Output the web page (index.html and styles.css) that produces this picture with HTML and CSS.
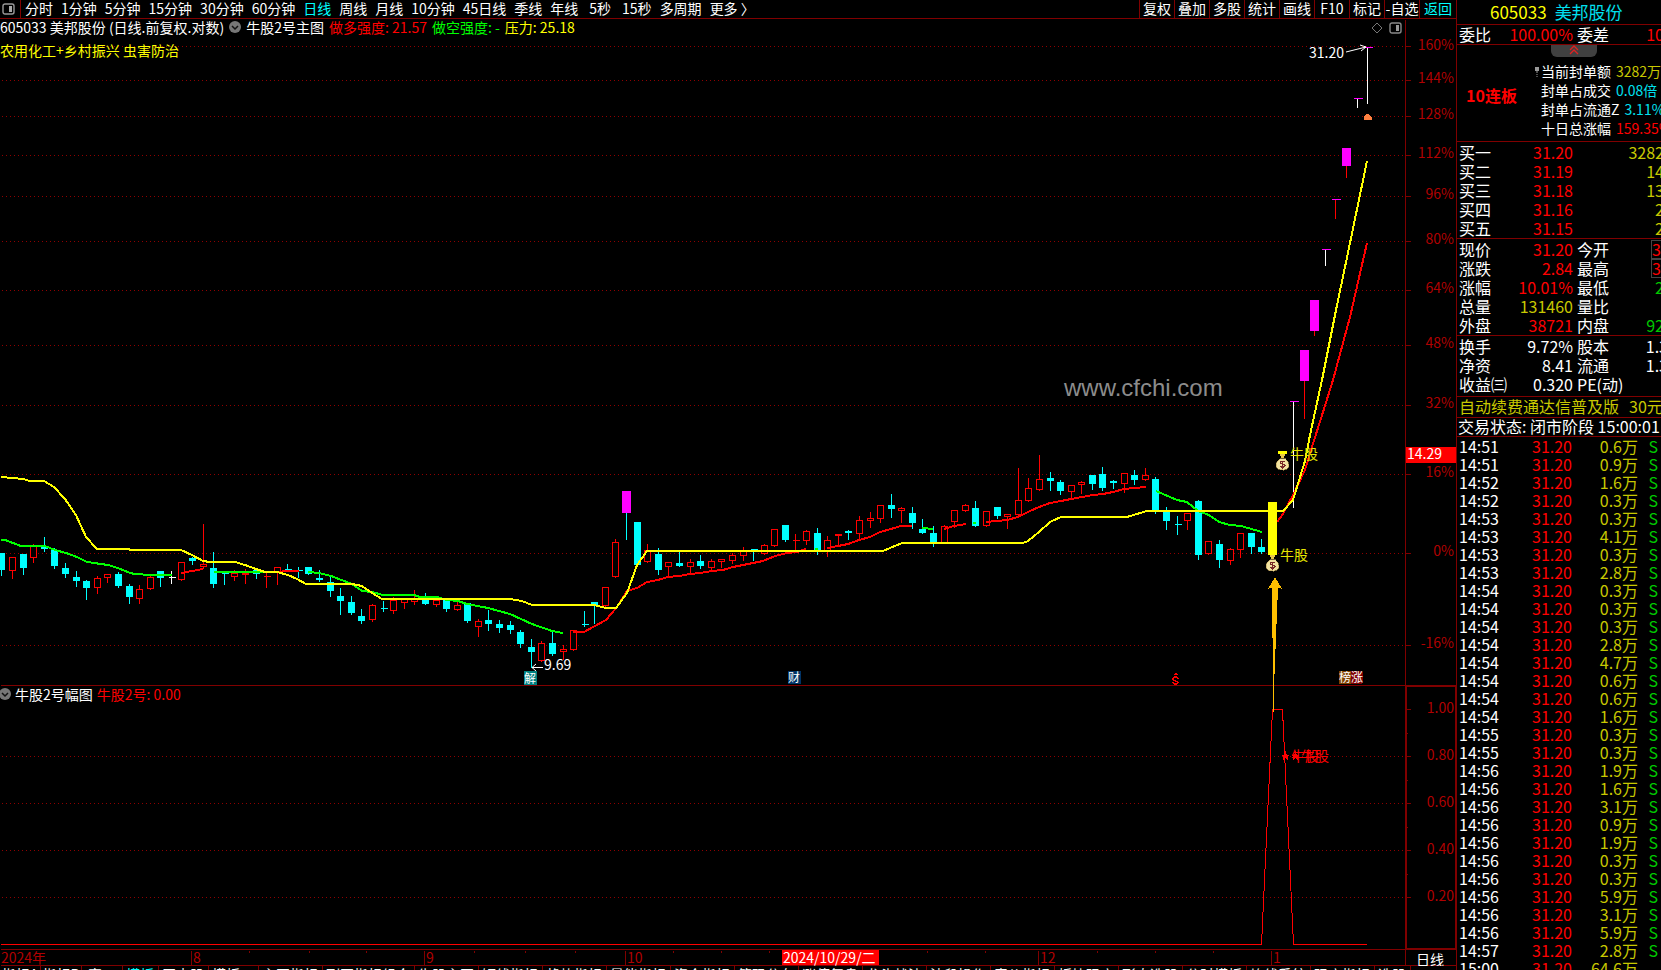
FILE: index.html
```html
<!DOCTYPE html>
<html lang="zh-CN">
<head>
<meta charset="utf-8">
<title>605033 美邦股份</title>
<link rel="stylesheet" href="styles.css">
</head>
<body>
<div class="app">
  <main class="charts">
    <nav class="topbar">
      <button class="icon-btn" aria-label="侧栏"><svg width="13" height="12" viewBox="0 0 13 12"><rect x="1" y="1" width="11" height="10" rx="2" fill="none" stroke="#999" stroke-width="1.4"/><rect x="7" y="3" width="3" height="6" fill="#aaa"/></svg></button>
      <div class="periods">
        <button>分时</button><button>1分钟</button><button>5分钟</button><button>15分钟</button><button>30分钟</button><button>60分钟</button><button class="active">日线</button><button>周线</button><button>月线</button><button>10分钟</button><button>45日线</button><button>季线</button><button>年线</button><button class="sec">5秒</button><button class="sec">15秒</button><button>多周期</button><button>更多 〉</button>
      </div>
      <div class="tools">
        <button>复权</button><button>叠加</button><button>多股</button><button>统计</button><button>画线</button><button>F10</button><button>标记</button><button>-自选</button><button class="active last">返回</button>
      </div>
    </nav>

    <section class="panel">
      <div class="legend">
        <span>605033 美邦股份 (日线.前复权.对数)</span>
        <svg class="fold" width="12" height="12" viewBox="0 0 12 12"><circle cx="6" cy="6" r="6" fill="#777"/><path d="M3 5l3 3 3-3" fill="none" stroke="#111" stroke-width="1.5"/></svg>
        <span>牛股2号主图</span>
        <span class="red">做多强度: 21.57</span>
        <span class="lime">做空强度: -</span>
        <span class="yellow">压力: 25.18</span>
      </div>
      <div class="concept">农用化工+乡村振兴 虫害防治</div>
      <svg class="plot" viewBox="0 19 1456 667">
        <g class="grid" transform="translate(0 .5)">
          <path d="M2 46H1405M2 80H1405M2 116H1405M2 155H1405M2 196H1405M2 241H1405M2 290H1405M2 345H1405M2 405H1405M2 474H1405M2 553H1405M2 645H1405"/>
        </g>
        <g class="frame" transform="translate(.5 .5)">
          <path d="M1405 19V685M0 685H1456M1405 46h5M1405 80h5M1405 116h5M1405 155h5M1405 196h5M1405 241h5M1405 290h5M1405 345h5M1405 405h5M1405 474h5M1405 553h5M1405 645h5"/>
        </g>
        <g class="axis">
          <text x="1454" y="50">160%</text><text x="1454" y="83">144%</text><text x="1454" y="119">128%</text><text x="1454" y="158">112%</text><text x="1454" y="199">96%</text><text x="1454" y="244">80%</text><text x="1454" y="293">64%</text><text x="1454" y="348">48%</text><text x="1454" y="408">32%</text><text x="1454" y="477">16%</text><text x="1454" y="556">0%</text><text x="1454" y="648">-16%</text>
        </g>
        <text class="watermark" x="1064" y="396">www.cfchi.com</text>
        <g id="candles" transform="translate(.5 .5)"></g>
        <g class="ma green">
          <path d="M1 540L5 540 21 546H45L55 550 66 553 77 557 87 562 108 565 118 568 130 573 135 574 150 575H172M214 572H265M308 572L319 573 331 576 352 584 362 591 372 592 383 595H414L420 597H437L447 600 458 601 467 604 488 608 510 614 532 624 552 631 563 633M815 549H818M922 528L933 529M973 523H976M1156 491L1177 500 1187 502 1198 511 1209 515 1219 522 1230 525 1241 526 1262 532"/>
        </g>
        <g class="ma red-line">
          <path d="M181 573L192 571 203 569M277 572L288 571H299M573 632H584L595 626 606 620 617 607 627 591 637 588 647 582 658 580 668 577 679 576 690 574 700 573 712 571 723 570 733 567 753 563 763 561 775 556 787 553 797 552 806 549M827 548L838 546 848 544 859 540 870 537 880 532 891 529 901 526H912M944 529L954 526 966 524M986 522L997 521 1007 520 1018 517 1028 512 1039 507 1050 503 1061 501 1071 499 1082 497 1093 495 1103 494 1113 492 1124 489 1135 488 1146 487M1277 522L1283 514 1293 495 1305 470 1312 447 1323 412 1333 380 1350 317 1367 243"/>
        </g>
        <g class="ma yellow-line">
          <path d="M1 477L12 478 23 479 30 481H44L54 487 65 499 76 515 86 537 97 549H129L130 550H181L192 555 203 561 210 562H235L245 565 256 569 265 572H277L288 575 297 579 306 584H352L362 586 372 593 382 599H510L522 601 532 605H594L606 608H616L627 593 637 565 647 551H883L902 543H1023L1028 541 1039 532 1050 522 1061 517H1127L1147 511H1283L1293 500 1305 461 1310 435 1322 380 1330 340 1336 310 1350 243 1367 161"/>
        </g>
        <path d="M1363.5 120v-3l4-3.500 4 3.500v3z" fill="#ff8040"/>
        <text class="label" x="1309" y="58">31.20</text>
        <path class="pointer" d="M1346 52L1366 47M1360 45L1366 47 1361 51"/>
        <text class="label" x="544" y="670">9.69</text>
        <path class="pointer" d="M543 667.500H532M536 664L532 667.500 536 671"/>
        <rect x="1278" y="451" width="9" height="3" fill="#ff0"/>
        <rect x="1268" y="502" width="9" height="53" fill="#ff0"/>
        <g id="bag">
          <path d="M1270 555h5l-1 4h-3z" fill="#e8c84a"/><path d="M1270.500 559.500c-3 2-4.500 4-4.500 6.500 0 3 2.500 5 6.500 5s6.500-2 6.500-5c0-2.500-1.500-4.500-4.500-6.500z" fill="#f2e2a0" stroke="#b89a50" stroke-width=".6"/><path d="M1275 563c-1.500-1.300-4.500-1-4.500.7 0 1.800 4.500.9 4.500 2.900 0 1.800-3.500 2-5 .6M1272.500 561.500v8" fill="none" stroke="#7a2828" stroke-width="1.2"/>
        </g>
        <use href="#bag" x="10" y="-101"/>
        <text class="label yellow-fill" x="1290" y="459">牛股</text>
        <text class="label yellow-fill" x="1280" y="560">牛股</text>
        <path d="M1275 577l7 12-4-1.500L1274 686h-1L1272 587.500l-4 1.500z" fill="#ffbf00"/>
        <g class="badge">
          <rect x="524" y="671" width="13" height="14" fill="#008080"/><text x="530" y="683">解</text>
          <rect x="788" y="671" width="13" height="13" fill="#003366"/><text x="794" y="682">财</text>
          <rect x="1339" y="671" width="12" height="13" fill="#804000"/><path d="M1351 671h10l2 2v9l-2 2h-10z" fill="#800000"/><text x="1345" y="682">榜</text><text x="1357" y="682">涨</text>
        </g>
        <path d="M1173 675h5l-2.500-2.500z" fill="#f00"/><path d="M1178 679c0-2.500-5-2.500-5 0s5 1.500 5 3.500-5 2-5-.5" fill="none" stroke="#f00" stroke-width="1.500"/>
        <rect x="1406" y="447" width="50" height="16" fill="#f00"/>
        <text class="label" x="1407" y="459">14.29</text>
      </svg>
      <div class="corner">
        <svg width="12" height="12" viewBox="0 0 12 12"><path d="M6 1l5 5-5 5-5-5z" fill="none" stroke="#777"/></svg>
        <svg width="13" height="12" viewBox="0 0 13 12"><rect x="1" y="1" width="11" height="10" rx="2" fill="none" stroke="#888" stroke-width="1.400"/><rect x="7" y="3" width="3" height="6" fill="#999"/></svg>
      </div>
    </section>

    <section class="panel">
      <div class="legend sub">
        <svg class="fold" width="12" height="12" viewBox="0 0 12 12"><circle cx="6" cy="6" r="6" fill="#777"/><path d="M3 5l3 3 3-3" fill="none" stroke="#111" stroke-width="1.500"/></svg>
        <span>牛股2号幅图</span>
        <span class="red">牛股2号: 0.00</span>
      </div>
      <svg class="plot" viewBox="0 686 1456 280">
        <g class="grid" transform="translate(0 .5)"><path d="M2 756H1405M2 803H1405M2 850H1405M2 897H1405"/></g>
        <g class="frame" transform="translate(.5 .5)">
          <path d="M0 949H1456M0 965H1456M1405 949V965M1405 709h5M1405 756h5M1405 803h5M1405 850h5M1405 897h5M1405 733h2M1405 780h2M1405 827h2M1405 874h2"/>
          <path d="M191 950V965M424 950V965M625 950V965M1038 950V965M1271 950V965M249 950v2M309 950v2M366 950v2M474 950v2M525 950v2M575 950v2M673 950v2M721 950v2M769 950v2M927 950v2M985 950v2M1097 950v2M1155 950v2M1213 950v2"/>
        </g>
        <path d="M1405 686h2v262h48V686h1v264h-51zM1405 685h51v2h-51z" fill="#800000"/>
        <g class="axis">
          <text x="1454" y="713">1.00</text><text x="1454" y="760">0.80</text><text x="1454" y="807">0.60</text><text x="1454" y="854">0.40</text><text x="1454" y="901">0.20</text>
        </g>
        <g class="axis dates">
          <text x="1" y="963">2024年</text><text x="193" y="963">8</text><text x="426" y="963">9</text><text x="627" y="963">10</text><text x="1040" y="963">12</text><text x="1273" y="963">1</text>
        </g>
        <rect x="782" y="950" width="97" height="15" fill="#f00"/>
        <text class="label" x="783" y="963">2024/10/29/二</text>
        <text class="label" x="1416" y="965">日线</text>
        <path d="M1 944.500H1261.500L1272.500 709.500H1282.500L1293.500 944.500H1367" fill="none" stroke="#f00"/>
        <path d="M1273 686h1l-.5 26z" fill="#ffbf00"/>
        <g class="label red-fill">
          <path id="star" d="M1285.500 751l1.300 3.500h3.700l-3 2.200 1.200 3.800-3.200-2.300-3.200 2.300 1.200-3.800-3-2.200h3.700z"/>
          <use href="#star" x="10"/>
          <text x="1291" y="761">牛股</text><text x="1301" y="761">牛股</text>
        </g>
      </svg>
    </section>

    <nav class="bottombar">
      <button class="slim">指标A</button><button class="slim">指标B</button><button class="slim">窗口</button><button class="active">模板</button><button>买卖股</button><button>模板一</button><button>主图指标</button><button>副图指标组合</button><button>牛股主图</button><button>短线指标</button><button>趋势指标</button><button>量能指标</button><button>资金指标</button><button>筹码分布</button><button>涨停复盘</button><button>龙头战法</button><button>波段操作</button><button>竞价指标</button><button>板块强度</button><button>形态选股</button><button>分时模板</button><button>均线系统</button><button>强度指标</button><button>选股</button>
    </nav>
  </main>

  <aside class="quote">
    <h1 class="title"><span class="yellow">605033</span><span class="aqua">美邦股份</span></h1>
    <div class="stats ratio"><span>委比</span><b class="red">100.00%</b><span>委差</span><b class="red">10</b></div>
    <section class="seal">
      <button class="handle" aria-label="收起"><svg width="12" height="10" viewBox="0 0 12 10"><path d="M2 5l4-4 4 4M2 9l4-4 4 4" fill="none" stroke="#e02020" stroke-width="1.300"/></svg></button>
      <strong class="streak">10连板</strong>
      <div class="seal-list">
        <svg class="pin" width="4" height="10" viewBox="0 0 4 10"><path d="M0 0h4v4H0zM1.500 4h1v2h-1zM1.500 7h1v1h-1zM1.500 9h1v1h-1z" fill="#999"/></svg>
        <p>当前封单额<span class="olive">3282万</span></p>
        <p>封单占成交<span class="aqua">0.08倍</span></p>
        <p>封单占流通Z<span class="aqua">3.11%</span></p>
        <p>十日总涨幅<span class="red">159.35%</span></p>
      </div>
    </section>
    <div class="stats">
      <span>买一</span><b class="red">31.20</b><span></span><b class="olive">3282</b>
      <span>买二</span><b class="red">31.19</b><span></span><b class="olive">14</b>
      <span>买三</span><b class="red">31.18</b><span></span><b class="olive">13</b>
      <span>买四</span><b class="red">31.16</b><span></span><b class="olive">2</b>
      <span>买五</span><b class="red">31.15</b><span></span><b class="olive">2</b>
    </div>
    <div class="stats">
      <span>现价</span><b class="red">31.20</b><span>今开</span><b class="red boxed">3</b>
      <span>涨跌</span><b class="red">2.84</b><span>最高</span><b class="red boxed">3</b>
      <span>涨幅</span><b class="red">10.01%</b><span>最低</span><b class="green-text">2</b>
      <span>总量</span><b class="olive">131460</b><span>量比</span><b></b>
      <span>外盘</span><b class="red">38721</b><span>内盘</span><b class="green-text">92</b>
    </div>
    <div class="stats basics">
      <span>换手</span><b>9.72%</b><span>股本</span><b class="wide">1.3</b>
      <span>净资</span><b>8.41</b><span>流通</span><b class="wide">1.3</b>
      <span>收益㈢</span><b>0.320</b><span>PE(动)</span><b></b>
    </div>
    <p class="notice olive"><span>自动续费通达信普及版</span><span>30元</span></p>
    <p class="state">交易状态: 闭市阶段 15:00:01</p>
    <table class="ticks">
      <tbody>
        <tr><td>14:51</td><td>31.20</td><td>0.6万</td><td>S</td></tr>
        <tr><td>14:51</td><td>31.20</td><td>0.9万</td><td>S</td></tr>
        <tr><td>14:52</td><td>31.20</td><td>1.6万</td><td>S</td></tr>
        <tr><td>14:52</td><td>31.20</td><td>0.3万</td><td>S</td></tr>
        <tr><td>14:53</td><td>31.20</td><td>0.3万</td><td>S</td></tr>
        <tr><td>14:53</td><td>31.20</td><td>4.1万</td><td>S</td></tr>
        <tr><td>14:53</td><td>31.20</td><td>0.3万</td><td>S</td></tr>
        <tr><td>14:53</td><td>31.20</td><td>2.8万</td><td>S</td></tr>
        <tr><td>14:54</td><td>31.20</td><td>0.3万</td><td>S</td></tr>
        <tr><td>14:54</td><td>31.20</td><td>0.3万</td><td>S</td></tr>
        <tr><td>14:54</td><td>31.20</td><td>0.3万</td><td>S</td></tr>
        <tr><td>14:54</td><td>31.20</td><td>2.8万</td><td>S</td></tr>
        <tr><td>14:54</td><td>31.20</td><td>4.7万</td><td>S</td></tr>
        <tr><td>14:54</td><td>31.20</td><td>0.6万</td><td>S</td></tr>
        <tr><td>14:54</td><td>31.20</td><td>0.6万</td><td>S</td></tr>
        <tr><td>14:54</td><td>31.20</td><td>1.6万</td><td>S</td></tr>
        <tr><td>14:55</td><td>31.20</td><td>0.3万</td><td>S</td></tr>
        <tr><td>14:55</td><td>31.20</td><td>0.3万</td><td>S</td></tr>
        <tr><td>14:56</td><td>31.20</td><td>1.9万</td><td>S</td></tr>
        <tr><td>14:56</td><td>31.20</td><td>1.6万</td><td>S</td></tr>
        <tr><td>14:56</td><td>31.20</td><td>3.1万</td><td>S</td></tr>
        <tr><td>14:56</td><td>31.20</td><td>0.9万</td><td>S</td></tr>
        <tr><td>14:56</td><td>31.20</td><td>1.9万</td><td>S</td></tr>
        <tr><td>14:56</td><td>31.20</td><td>0.3万</td><td>S</td></tr>
        <tr><td>14:56</td><td>31.20</td><td>0.3万</td><td>S</td></tr>
        <tr><td>14:56</td><td>31.20</td><td>5.9万</td><td>S</td></tr>
        <tr><td>14:56</td><td>31.20</td><td>3.1万</td><td>S</td></tr>
        <tr><td>14:56</td><td>31.20</td><td>5.9万</td><td>S</td></tr>
        <tr><td>14:57</td><td>31.20</td><td>2.8万</td><td>S</td></tr>
        <tr><td>15:00</td><td>31.20</td><td>64.6万</td><td></td></tr>
      </tbody>
    </table>
  </aside>
</div>
<script src="candles.js"></script>
</body>
</html>
```

FILE: styles.css
```css
* { box-sizing: border-box; margin: 0; padding: 0; }
body {
  background: #000;
  color: #fff;
  font: 14px/18px "Noto Sans CJK SC", "Liberation Sans", sans-serif;
  overflow: hidden;
}
button { background: none; border: 0; color: inherit; font: inherit; white-space: nowrap; }
b { font-weight: normal; }
svg { display: block; }

.red { color: #f00; }
.lime { color: #0f0; }
.yellow { color: #ff0; }
.aqua { color: #00e0f0; }
.olive { color: #c8c800; }
.green-text { color: #00c800; }

.app { display: grid; grid-template-columns: minmax(0, 1fr) 205px; height: 100vh; overflow: hidden; }
.charts { min-width: 0; overflow: hidden; }

.topbar { display: flex; height: 19px; padding-bottom: 2px; border-bottom: 1px solid #800000; line-height: 16px; }
.icon-btn { width: 21px; height: 18px; padding: 2px; border-right: 1px solid #800000; }
.periods { display: flex; flex: 1; gap: 8px; padding-left: 4px; overflow: hidden; }
.sec { padding-left: 3px; }
.tools { display: flex; }
.tools button { width: 35px; height: 18px; padding-bottom: 2px; border-left: 1px solid #800000; }
.tools .last { width: 37px; }
.topbar .active, .bottombar .active { color: #0ff; }

.panel { position: relative; }
.plot { width: 100%; height: auto; shape-rendering: crispEdges; }
.legend { position: absolute; top: -1px; left: 0; display: flex; align-items: center; gap: 5px; white-space: nowrap; }
.legend.sub { gap: 4px; left: -1px; }
.legend .fold { shape-rendering: auto; }
.concept { position: absolute; top: 22px; left: 0; color: #ff0; }
.corner { position: absolute; top: 3px; right: 54px; display: flex; gap: 6px; }

.grid path { fill: none; stroke: #900000; stroke-dasharray: 1 3; }
.frame path { fill: none; stroke: #800000; }
.axis text { fill: #b00000; text-anchor: end; }
.axis.dates text { text-anchor: start; }
.watermark { font: 24px "Liberation Sans", Arial, sans-serif; fill: #8c8c8c; }
.label { fill: #fff; }
.yellow-fill { fill: #e6e600; }
.red-fill { fill: #f00; }
.badge text { font-size: 12px; fill: #fff; text-anchor: middle; }
.pointer { fill: none; stroke: #fff; shape-rendering: auto; }
.ma path { fill: none; stroke-width: 2; }
.green path { stroke: #0f0; }
.red-line path { stroke: #f00; }
.yellow-line path { stroke: #ff0; }

.c-cyan { fill: #0ff; stroke: #0ff; }
.c-red { fill: #000; stroke: #f00; }
.c-white { fill: #fff; stroke: #fff; }
.c-magenta { fill: #f0f; stroke: #f0f; }

.bottombar { display: flex; height: 16px; overflow: hidden; line-height: 16px; }
.bottombar button { flex: none; padding: 0 4px 0 3px; border-right: 1px solid #800000; }
.bottombar .slim { width: 41px; padding: 0 1px; }

.quote { border-left: 1px solid #800000; overflow: hidden; font-size: 16px; line-height: 19px; }
.title { display: flex; gap: 8px; height: 25px; padding-left: 33px; font-size: 17px; font-weight: normal; line-height: 23px; border-bottom: 1px solid #800000; white-space: nowrap; }
.stats {
  display: grid;
  grid-template-columns: 32px 82px 32px minmax(0, 1fr);
  padding: 1px 0 0 2px;
  margin-right: -3px;
  border-bottom: 1px solid #800000;
  white-space: nowrap;
}
.stats b { text-align: right; }
.stats span:nth-child(4n + 3) { padding-left: 4px; }
.stats .boxed { justify-self: end; width: 13px; padding-right: 2px; border: 1px solid #444; line-height: 17px; }
.stats .wide { margin-right: -4px; }
.ratio { height: 20px; padding-top: 0; line-height: 18px; }
.basics { padding-bottom: 2px; }

.seal { position: relative; display: flex; padding: 17px 0 3px 9px; border-bottom: 1px solid #800000; font-size: 14px; white-space: nowrap; }
.handle { position: absolute; top: 0; left: 94px; display: flex; justify-content: center; width: 46px; height: 12px; background: #404040; border-radius: 0 0 6px 6px; }
.streak { flex: none; width: 75px; padding-top: 24px; color: #f00; font-size: 16px; }
.seal-list { position: relative; flex: none; }
.seal-list span { margin-left: 5px; }
.pin { position: absolute; top: 5px; left: -6px; }

.notice { display: flex; gap: 10px; height: 21px; padding-left: 2px; line-height: 19px; border-bottom: 1px solid #800000; white-space: nowrap; }
.state { height: 19px; padding-left: 1px; line-height: 17px; border-bottom: 1px solid #800000; white-space: nowrap; }

.ticks { width: 100%; table-layout: fixed; border-collapse: collapse; line-height: 18px; }
.ticks td { height: 18px; text-align: right; white-space: nowrap; }
.ticks td:nth-child(1) { width: 50px; padding-left: 2px; text-align: left; }
.ticks td:nth-child(2) { width: 65px; color: #f00; }
.ticks td:nth-child(3) { width: 66px; color: #c8c800; }
.ticks td:nth-child(4) { padding-right: 3px; color: #00c800; }
```

FILE: candles.js
```javascript
// colour, centre x, body top, body bottom, wick top, wick bottom
const rows = `
c 1 553 570 553 575|r 12 557 571 557 578|c 23 554 568 554 574|r 33 546 558 543 562|c 44 547 549 536 551
c 54 550 566 547 568|c 65 568 574 562 577|c 76 577 581 570 586|c 86 581 588 579 599|r 97 578 588 575 593
r 107 574 578 574 582|c 118 574 586 571 587|c 129 586 597 583 603|r 139 589 599 584 603|r 150 577 589 575 589
c 160 571 578 571 586|w 171 577 578 570 583|r 181 562 580 562 580|c 192 558 561 556 564|r 203 564 567 523 568
c 213 568 584 551 587|c 224 573 574 570 584|r 234 573 577 569 580|r 245 573 575 568 583|c 256 570 574 567 578
r 266 576 577 572 587|r 277 567 572 567 584|c 287 569 570 563 570|c 298 570 571 566 577|c 308 567 574 567 574
c 319 578 580 569 581|c 330 582 591 575 596|c 340 596 601 587 614|c 351 602 613 595 614|c 361 616 621 608 623
r 372 605 620 603 621|c 383 608 609 600 611|r 393 600 611 596 613|r 404 599 603 599 608|r 414 599 602 589 604
c 425 599 604 592 604|r 436 600 605 595 606|c 446 599 609 599 611|r 457 605 610 601 610|c 467 603 621 603 622
r 478 621 627 618 636|c 488 620 624 609 630|c 499 624 628 619 632|c 510 625 630 620 633|c 520 632 644 629 647
c 531 647 652 638 667|r 541 643 661 640 661|c 552 643 654 631 655|r 563 649 652 644 659|r 573 630 650 630 650
c 584 624 625 610 626|c 594 602 606 602 623|r 605 587 606 587 606|r 615 542 577 538 577|c 637 522 565 522 565
r 647 550 562 543 562|c 658 554 570 547 574|r 668 562 567 562 575|c 679 563 566 551 566|r 690 562 567 558 572
c 700 561 566 554 568|r 711 561 568 558 571|r 721 559 562 558 567|r 732 555 561 552 563|r 743 551 556 546 560
c 753 549 550 548 560|r 764 545 554 543 554|r 774 529 546 529 546|c 785 525 540 525 541|r 795 540 541 533 551
r 806 531 541 529 544|c 817 533 551 527 554|r 827 540 551 535 556|r 838 534 536 534 545|c 848 531 533 529 539
r 859 520 534 515 538|r 870 518 521 511 527|r 880 505 519 504 522|c 891 505 509 493 517|r 901 508 511 506 522
c 912 513 523 506 528|c 922 529 533 518 533|c 933 533 543 525 546|r 944 526 543 524 543|r 954 510 522 510 527
r 965 505 511 503 511|c 975 508 526 500 526|r 986 511 526 511 526|c 997 507 516 506 518|r 1007 514 517 513 528
r 1018 500 515 467 515|r 1028 488 501 477 501|r 1039 479 490 454 490|c 1050 478 481 471 490|c 1060 482 491 479 494
r 1071 485 492 484 499|r 1081 482 485 480 493|c 1092 475 484 474 489|c 1102 474 488 466 490|c 1113 481 483 479 488
r 1124 473 484 472 492|c 1134 475 480 469 484|r 1145 475 480 467 480|c 1155 479 511 476 513|c 1166 511 521 506 529
c 1177 524 525 515 534|r 1187 513 521 512 529|c 1198 501 555 499 559|r 1208 541 554 540 554|c 1219 544 560 539 567
r 1230 549 561 547 564|r 1240 533 550 532 557|c 1251 533 547 533 553|c 1261 547 552 538 553`;

// limit-up bars: wick colour, centre x, body top, body bottom, wick bottom
const limits = `c 626 491 513 539|w 1293 401 402 507|r 1304 350 381 418|r 1314 300 331 335|w 1325 249 250 265
r 1335 199 200 218|r 1346 148 166 177|w 1357 98 99 107|w 1367 47 48 103`;

const names = { c: 'c-cyan', r: 'c-red', w: 'c-white' };
const group = document.getElementById('candles');

function add(tag, cls, attrs) {
  const el = document.createElementNS('http://www.w3.org/2000/svg', tag);
  el.setAttribute('class', cls);
  for (const key in attrs) el.setAttribute(key, attrs[key]);
  group.append(el);
}

for (const row of rows.trim().split(/[|\n]/)) {
  const [color, ...nums] = row.trim().split(' ');
  const [x, top, bottom, high, low] = nums.map(Number);
  add('path', names[color], { d: `M${x} ${high}V${low}` });
  if (bottom - top < 2) add('path', names[color], { d: `M${x - 3} ${top}h7` });
  else add('rect', names[color], { x: x - 3, y: top, width: 6, height: bottom - top - 1 });
}

for (const row of limits.split(/[|\n]/)) {
  const [color, ...nums] = row.trim().split(' ');
  const [x, top, bottom, low] = nums.map(Number);
  add('path', names[color], { d: `M${x} ${top}V${low}` });
  if (bottom - top < 2) add('path', 'c-magenta', { d: `M${x - 4} ${top}h9` });
  else add('rect', 'c-magenta', { x: x - 4, y: top, width: 8, height: bottom - top - 1 });
}
```
